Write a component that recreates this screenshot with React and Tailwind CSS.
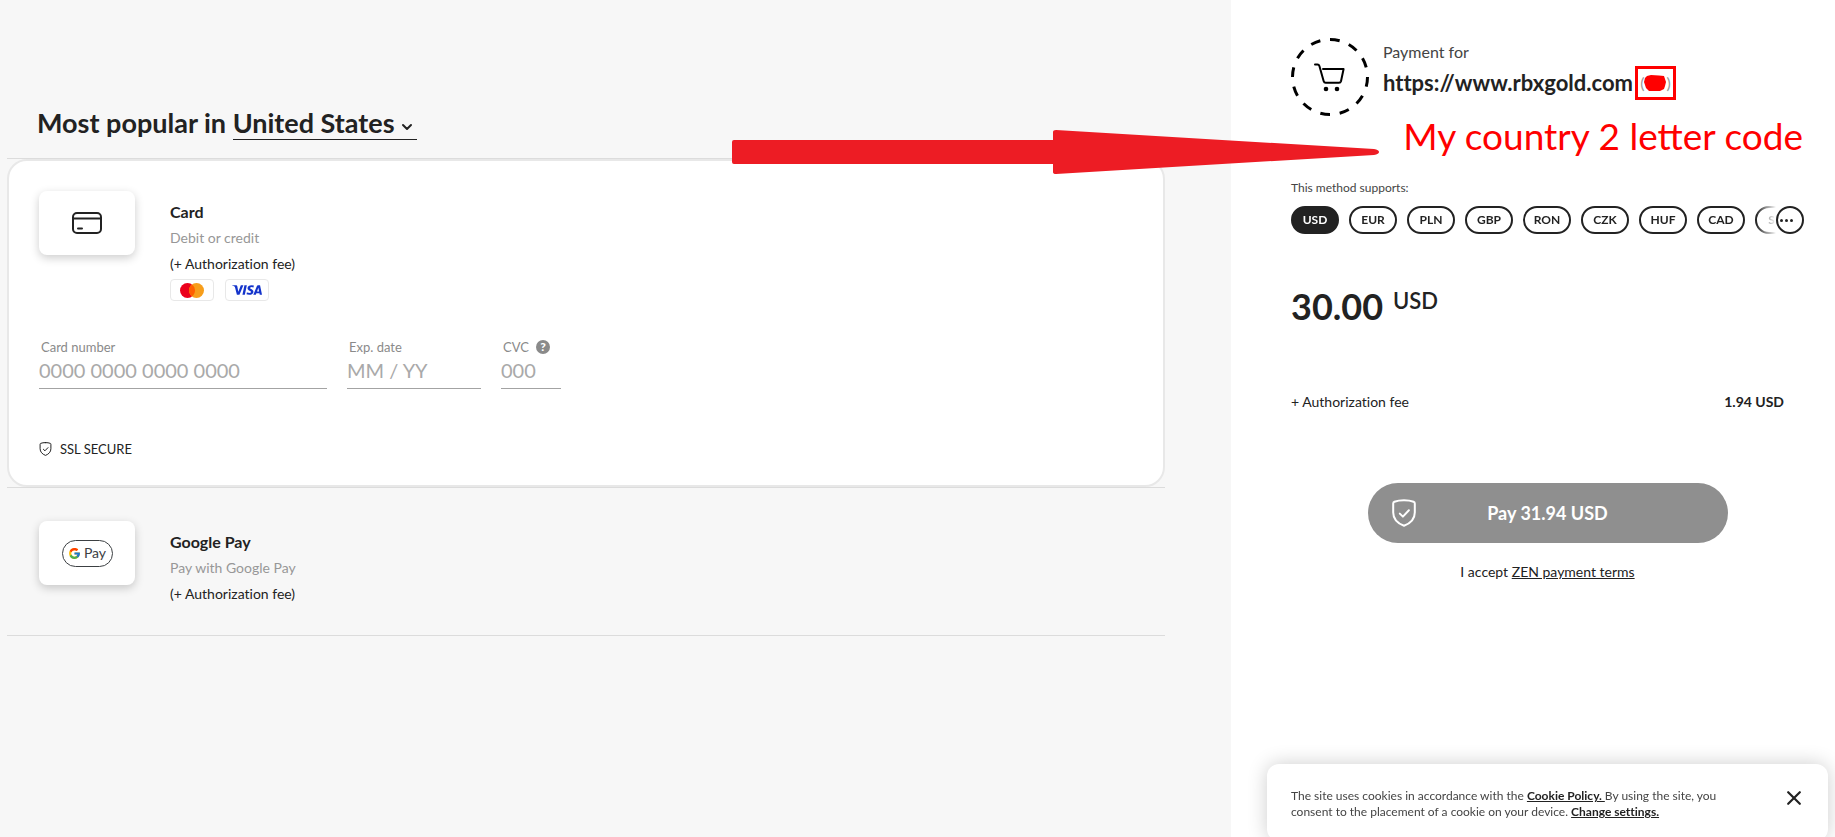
import React from 'react'
import { FcGoogle } from 'react-icons/fc'
import { SiVisa } from 'react-icons/si'
import { ChevronDown } from 'lucide-react'

const currencies = ['USD', 'EUR', 'PLN', 'GBP', 'RON', 'CZK', 'HUF', 'CAD', 'SEK']

function ShieldIcon({ className, strokeWidth = 2 }) {
  return (
    <svg viewBox="0 0 24 28" fill="none" stroke="currentColor" strokeWidth={strokeWidth} strokeLinecap="round" strokeLinejoin="round" className={className}>
      <path d="M12 1.200c-3.600 0-7 .5-9.600 1.500-.8.300-1.200.900-1.200 1.700v9.100c0 6.200 4.300 10.800 10.800 13.300 6.500-2.500 10.800-7.100 10.800-13.300V4.400c0-.8-.4-1.400-1.200-1.700C19 1.700 15.600 1.200 12 1.200z" />
      <path d="M7.800 14.600l3.100 3 6-6.300" />
    </svg>
  )
}

function CardIcon() {
  return (
    <svg viewBox="0 0 30 22" fill="none" stroke="currentColor" strokeWidth="2" strokeLinecap="round" className="w-[30px]">
      <rect x="1" y="1" width="28" height="20" rx="4" />
      <path d="M1 6.500h28M6 16.500h4" />
    </svg>
  )
}

function CartIcon() {
  return (
    <svg viewBox="0 0 78 78" fill="none" stroke="#000" className="w-[78px] shrink-0">
      <circle cx="39" cy="39" r="37.500" strokeWidth="3" pathLength="240" strokeDasharray="10 10" />
      <path d="M24 26.500h2.500c1 0 1.600.5 1.900 1.500l4.300 15.200c.3 1 .9 1.500 1.900 1.500H48c1 0 1.700-.5 2-1.500l2.600-12.200H32" strokeWidth="2" strokeLinecap="round" strokeLinejoin="round" />
      <circle cx="35" cy="51" r="2.300" fill="#000" stroke="none" />
      <circle cx="46" cy="51" r="2.300" fill="#000" stroke="none" />
    </svg>
  )
}

function Tile({ children }) {
  return (
    <div className="flex h-16 w-24 shrink-0 items-center justify-center rounded-lg bg-white shadow-[0_3px_10px_rgba(0,0,0,0.2)]">
      {children}
    </div>
  )
}

function Method({ icon, title, desc, children }) {
  return (
    <div className="flex gap-[35px]">
      <Tile>{icon}</Tile>
      <div className="pt-2 text-sm leading-[26px]">
        <h2 className="text-base leading-[26px] font-bold">{title}</h2>
        <p className="text-[#979797]">{desc}</p>
        <p className="leading-[26px]">(+ Authorization fee)</p>
        {children}
      </div>
    </div>
  )
}

function Field({ id, label, placeholder, width, help }) {
  return (
    <div className={width}>
      <div className="flex h-4 items-center gap-[7px] pl-0.5">
        <label htmlFor={id} className="text-[13px] leading-4 text-[#8a8a8a]">{label}</label>
        {help && (
          <button type="button" aria-label="CVC help" className="flex h-3.5 w-3.5 items-center justify-center rounded-full bg-[#8a8a8a] text-xs font-black text-white">
            ?
          </button>
        )}
      </div>
      <input
        id={id}
        type="text"
        placeholder={placeholder}
        className="h-[34px] w-full border-b border-[#a3a3a3] bg-transparent pb-1 text-xl outline-none placeholder:text-[#a9a9a9]"
      />
    </div>
  )
}

function PaymentMethods() {
  return (
    <main className="min-w-0 flex-1 bg-[#f7f7f7] pt-[107px] pr-4 pl-[7px] lg:pr-[66px]">
      <div className="flex items-start border-b border-[#dcdcdc] pb-[18px] pl-[30px] text-[27px] leading-8 font-bold">
        <label htmlFor="country" className="whitespace-pre">Most popular in </label>
        <div className="flex items-center border-b border-[#222]">
          <select id="country" className="appearance-none bg-transparent outline-none">
            <option>United States</option>
          </select>
          <ChevronDown className="mt-2 mr-0.5 ml-1 h-4 w-4 shrink-0" strokeWidth={3} />
        </div>
      </div>

      <ul>
        <li className="border-b border-[#dcdcdc]">
          <div className="rounded-[20px] border-2 border-[#e8e8e8] bg-white px-[30px] pt-[30px] pb-7">
            <Method icon={<CardIcon />} title="Card" desc="Debit or credit">
              <div className="mt-0.5 flex gap-[11px]">
                <span className="flex h-[22px] w-11 items-center justify-center rounded-sm border border-[#e8e8e8]">
                  <svg viewBox="0 0 24 15" className="w-6">
                    <circle cx="7.500" cy="7.500" r="7.500" fill="#eb001b" />
                    <circle cx="16.500" cy="7.500" r="7.500" fill="#f79e1b" />
                    <path d="M12 1.500a7.500 7.500 0 0 1 0 12 7.500 7.500 0 0 1 0-12z" fill="#ff5f00" />
                  </svg>
                </span>
                <span className="flex h-[22px] w-11 items-center justify-center rounded-sm border border-[#e8e8e8]">
                  <SiVisa className="h-[30px] w-[30px] text-[#1434cb]" />
                </span>
              </div>
            </Method>

            <div className="mt-[38px] flex flex-wrap gap-5">
              <Field id="card-number" label="Card number" placeholder="0000 0000 0000 0000" width="w-72" />
              <Field id="exp-date" label="Exp. date" placeholder="MM / YY" width="w-[134px]" />
              <Field id="cvc" label="CVC" placeholder="000" width="w-[60px]" help />
            </div>

            <p className="mt-[52px] flex items-center gap-2 text-[13px] leading-4">
              <ShieldIcon className="h-3.5 w-[13px]" />
              SSL SECURE
            </p>
          </div>
        </li>
        <li className="border-b border-[#dcdcdc]">
          <div className="px-8 pt-[33px] pb-7">
            <Method
              icon={
                <span className="flex h-[27px] w-[51px] items-center justify-center gap-[3px] rounded-full border border-[#3c4043] text-sm text-[#3c4043]">
                  <FcGoogle className="h-[13px] w-[13px]" />
                  Pay
                </span>
              }
              title="Google Pay"
              desc="Pay with Google Pay"
            />
          </div>
        </li>
      </ul>
    </main>
  )
}

function Summary() {
  return (
    <aside className="relative bg-white px-4 pt-[38px] pb-24 lg:w-[604px] lg:shrink-0 lg:pr-[31px] lg:pl-[60px]">
      <div className="flex gap-3.5">
        <CartIcon />
        <div>
          <p className="pt-0.5 text-base leading-6 text-[#444]">Payment for</p>
          <div className="flex items-center gap-0.5 pt-0.5">
            <h1 className="text-[22px] leading-7 font-bold">https://www.rbxgold.com</h1>
            <span className="flex h-[34px] w-[41px] items-center justify-center border-3 border-[#f00] text-base leading-4 text-[#999]">
              (
              <svg viewBox="0 0 22 16" className="w-[22px]">
                <path d="M3 1l4-1 8 .5 5 .5 1 3 1 3-1 4-1 3-4 2H5l-3-3-1-3-1-3 1-4z" fill="#f00" />
              </svg>
              )
            </span>
          </div>
        </div>
      </div>

      <p className="mt-16 text-xs leading-4 text-[#444]">This method supports:</p>
      <div className="mt-2.5 flex">
        <div className="flex min-w-0 flex-1 gap-2.5 overflow-hidden [mask-image:linear-gradient(to_left,transparent,black_20px)]">
          {currencies.map((code, i) => (
            <button
              key={code}
              type="button"
              className={`h-7 w-12 shrink-0 rounded-full border-2 border-[#222] text-xs font-bold ${i === 0 ? 'bg-[#222] text-white' : 'bg-white'}`}
            >
              {code}
            </button>
          ))}
        </div>
        <button type="button" aria-label="More currencies" className="flex h-7 w-7 items-center gap-0.5 rounded-full border-2 border-[#222] pl-0.5">
          <i className="h-[3px] w-[3px] rounded-full bg-[#222]" />
          <i className="h-[3px] w-[3px] rounded-full bg-[#222]" />
          <i className="h-[3px] w-[3px] rounded-full bg-[#222]" />
        </button>
      </div>

      <p className="mt-[52px] flex items-start gap-2.5 font-bold">
        <span className="text-4xl leading-10">30.00</span>
        <span className="text-[22px] leading-[30px] font-semibold">USD</span>
      </p>

      <div className="mt-[66px] flex justify-between pr-5 text-sm leading-5">
        <span>+ Authorization fee</span>
        <b>1.94 USD</b>
      </div>

      <div className="mt-[71px] flex flex-col items-center">
        <button type="button" className="relative h-[60px] w-full max-w-[360px] rounded-full bg-[#8f8f8f] text-lg font-bold text-white">
          <ShieldIcon className="absolute top-4 left-6 w-6" />
          Pay 31.94 USD
        </button>
        <p className="mt-[19px] text-sm leading-5">
          I accept <a href="#terms" className="underline">ZEN payment terms</a>
        </p>
      </div>

      <p className="absolute top-[112px] right-8 text-[37px] leading-[48px] whitespace-nowrap text-[#f00] [font-variant-ligatures:normal]">
        My country 2 letter code
      </p>
      <svg viewBox="0 0 647 44" className="pointer-events-none absolute top-[130px] right-[456px] w-[647px]">
        <path d="M2 10h319V2q0-2 3-2l318 19q5 1 5 3t-5 3L324 44q-3 0-3-2V34H2q-2 0-2-2V12q0-2 2-2z" fill="#ed1c24" />
      </svg>
    </aside>
  )
}

function CookieBar() {
  return (
    <div className="fixed right-[7px] -bottom-1 flex w-[561px] max-w-full items-start justify-between rounded-xl bg-white pt-6 pr-[27px] pb-[21px] pl-6 shadow-[0_0_20px_rgba(0,0,0,0.2)]">
      <p className="max-w-[450px] text-xs leading-4 text-[#444]">
        The site uses cookies in accordance with the{' '}
        <a href="#cookies" className="font-bold text-[#222] underline">Cookie Policy. </a>
        By using the site, you consent to the placement of a cookie on your device.{' '}
        <a href="#settings" className="font-bold text-[#222] underline">Change settings.</a>
      </p>
      <button type="button" aria-label="Close" className="mt-[3px]">
        <svg viewBox="0 0 14 14" className="w-3.5" stroke="#222" strokeWidth="2.200" strokeLinecap="round">
          <path d="M1.200 1.200l11.600 11.600M12.800 1.200L1.200 12.800" />
        </svg>
      </button>
    </div>
  )
}

function App() {
  return (
    <div className="flex min-h-screen flex-col font-[Lato,sans-serif] text-[#222] [font-variant-ligatures:none] lg:flex-row">
      <PaymentMethods />
      <Summary />
      <CookieBar />
    </div>
  )
}

export default App
